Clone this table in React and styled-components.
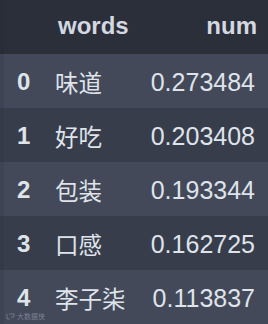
import React from "react";
import styled, { createGlobalStyle } from "styled-components";

const Global = createGlobalStyle`
  html, body { margin: 0; padding: 0; background: #434959; }
  body { width: 268px; height: 324px; overflow: hidden; }
`;

const Frame = styled.div`
  position: relative;
  width: 268px;
  height: 324px;
  font-family: "Liberation Sans", "Noto Sans CJK SC", sans-serif;
  color: #dfe3ea;
`;

const Row = styled.div`
  display: grid;
  grid-template-columns: 38px 1fr auto;
  align-items: center;
  height: 54px;
  box-sizing: border-box;
  padding: 0 11px 0 13px;
  border-left: 4px solid ${(p) => (p.$kind === "head" ? "#292d37" : p.$kind === "odd" ? "#353a47" : "#3e4454")};
  background: ${(p) => (p.$kind === "head" ? "#2b2f3a" : p.$kind === "odd" ? "#383d4b" : "#434959")};
`;

const Index = styled.div`
  font-size: 24px;
  line-height: 24px;
  font-weight: bold;
  padding-top: 1px;
`;

const HeadCell = styled.div`
  font-size: 24px;
  line-height: 24px;
  font-weight: bold;
  padding-left: ${(p) => p.$pad || 0}px;
  text-align: ${(p) => p.$align || "left"};
  padding-bottom: 2px;
  color: #d3d8e1;
`;

const Word = styled.div`
  font-size: 23.5px;
  line-height: 24px;
  font-family: "Noto Sans CJK SC", "Liberation Sans", sans-serif;
  padding-top: 1px;
`;

const Num = styled.div`
  font-size: 25px;
  line-height: 24px;
  text-align: right;
  padding-top: 1px;
  margin-right: 2px;
`;

const Watermark = styled.div`
  position: absolute;
  left: 6px;
  bottom: 4px;
  display: flex;
  align-items: center;
  gap: 2px;
  font-family: "Noto Sans CJK SC", sans-serif;
  font-size: 7px;
  line-height: 7px;
  color: #8a90a0;
  opacity: 0.8;
`;

const rows = [
  ["0", "味道", "0.273484"],
  ["1", "好吃", "0.203408"],
  ["2", "包装", "0.193344"],
  ["3", "口感", "0.162725"],
  ["4", "李子柒", "0.113837"],
];

export default function App() {
  return (
    <>
      <Global />
      <Frame>
        <Row $kind="head">
          <HeadCell />
          <HeadCell $pad={3}>words</HeadCell>
          <HeadCell $align="right">num</HeadCell>
        </Row>
        {rows.map(([i, w, n], k) => (
          <Row key={i} $kind={k % 2 ? "odd" : "even"}>
            <Index>{i}</Index>
            <Word>{w}</Word>
            <Num>{n}</Num>
          </Row>
        ))}
        <Watermark>
          <svg width="9" height="7" viewBox="0 0 9 7">
            <path d="M1 1v5h3M3 1h5v3H5" fill="none" stroke="#8a90a0" strokeWidth="0.8" />
          </svg>
          大数据侠
        </Watermark>
      </Frame>
    </>
  );
}
